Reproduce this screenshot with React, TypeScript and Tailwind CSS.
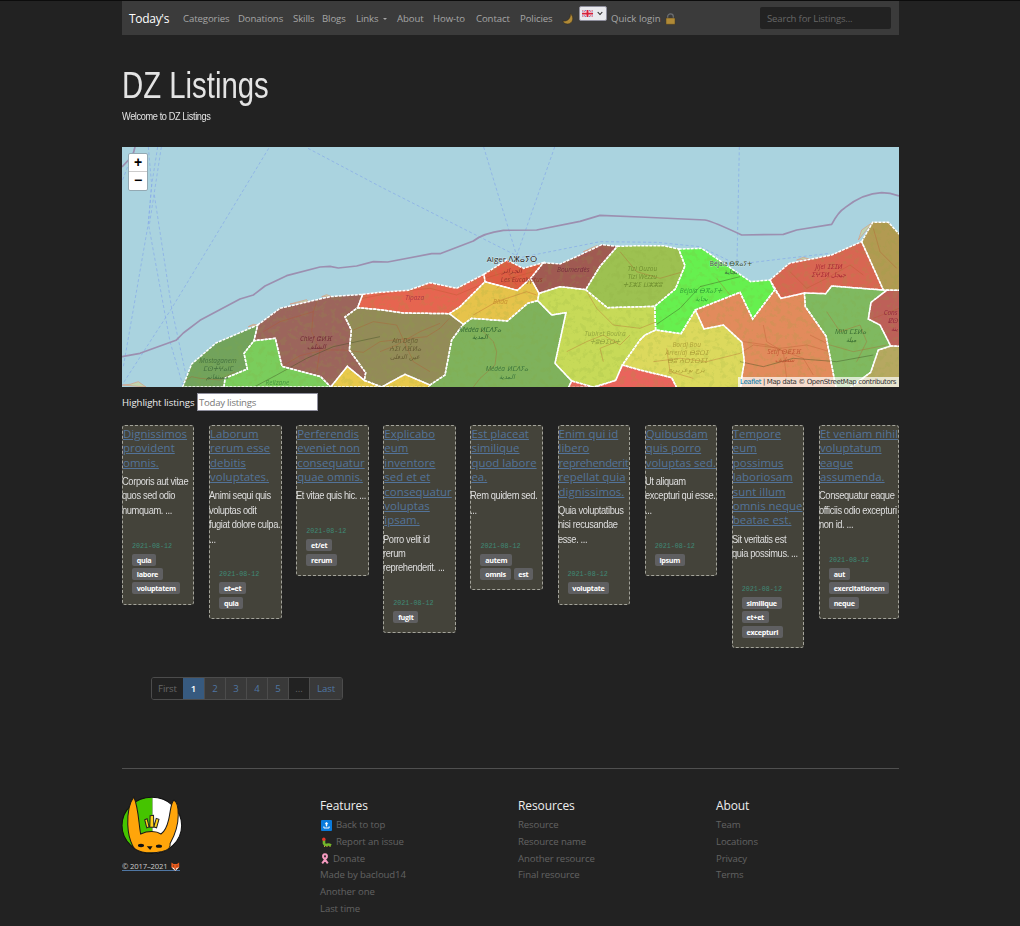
import React from "react";

const navItems: { label: string; cls: string }[] = [
  { label: "Categories", cls: "w-[55px]" },
  { label: "Donations", cls: "w-[55px]" },
  { label: "Skills", cls: "w-[29px]" },
  { label: "Blogs", cls: "w-[34px]" },
  { label: "Links", cls: "w-[41px]" },
  { label: "About", cls: "w-[36px]" },
  { label: "How-to", cls: "w-[43px]" },
  { label: "Contact", cls: "w-[44px]" },
  { label: "Policies", cls: "w-[42px]" },
];

type Listing = { title: string[]; body: string[]; tags: string[][] };

const listings: Listing[] = [
  { title: ["Dignissimos", "provident", "omnis."], body: ["Corporis aut vitae", "quos sed odio", "numquam. ..."], tags: [["quia"], ["labore"], ["voluptatem"]] },
  { title: ["Laborum", "rerum esse", "debitis", "voluptates."], body: ["Animi sequi quis", "voluptas odit", "fugiat dolore culpa.", "..."], tags: [["et=et"], ["quia"]] },
  { title: ["Perferendis", "eveniet non", "consequatur", "quae omnis."], body: ["Et vitae quis hic. ..."], tags: [["et/et"], ["rerum"]] },
  { title: ["Explicabo", "eum", "inventore", "sed et et", "consequatur", "voluptas", "ipsam."], body: ["Porro velit id", "rerum", "reprehenderit. ..."], tags: [["fugit"]] },
  { title: ["Est placeat", "similique", "quod labore", "ea."], body: ["Rem quidem sed.", "..."], tags: [["autem"], ["omnis", "est"]] },
  { title: ["Enim qui id", "libero", "reprehenderit", "repellat quia", "dignissimos."], body: ["Quia voluptatibus", "nisi recusandae", "esse. ..."], tags: [["voluptate"]] },
  { title: ["Quibusdam", "quis porro", "voluptas sed."], body: ["Ut aliquam", "excepturi qui esse.", "..."], tags: [["ipsum"]] },
  { title: ["Tempore", "eum", "possimus", "laboriosam", "sunt illum", "omnis neque", "beatae est."], body: ["Sit veritatis est", "quia possimus. ..."], tags: [["similique"], ["et+et"], ["excepturi"]] },
  { title: ["Et veniam nihil", "voluptatum", "eaque", "assumenda."], body: ["Consequatur eaque", "officiis odio excepturi", "non id. ..."], tags: [["aut"], ["exercitationem"], ["neque"]] },
];

const regions: [string, string][] = [
  ["#72a35c", "188,726 215,657 288,594 413,540 402,587 372,625 382,672 315,700 312,726"],
  ["#7acd5c", "312,726 315,700 382,672 372,625 402,587 466,580 486,664 602,695 632,726"],
  ["#9c655c", "413,540 480,490 600,462 630,455 728,448 713,488 675,516 694,555 688,615 737,683 733,706 682,664 632,726 602,695 486,664 466,580 402,587"],
  ["#e8c94b", "632,726 682,664 733,706 785,726"],
  ["#e8c94b", "785,726 855,688 930,720 925,728"],
  ["#e66550", "728,448 780,442 865,436 930,413 1010,430 1092,388 1095,410 1020,485 988,506 850,504 780,494 713,488"],
  ["#938b58", "713,488 780,494 850,504 988,506 1030,538 995,585 975,690 930,720 855,688 785,726 733,706 737,683 688,615 694,555 675,516"],
  ["#e6c34b", "988,506 1020,485 1095,410 1192,436 1232,400 1257,445 1253,467 1223,475 1162,528 1055,520 1030,538"],
  ["#de5c43", "1092,388 1160,345 1210,370 1270,353 1232,400 1192,436 1095,410"],
  ["#a05a52", "1270,353 1320,357 1380,330 1445,299 1492,304 1440,364 1397,434 1320,425 1257,445 1232,400"],
  ["#9dc151", "1492,304 1560,302 1630,302 1676,312 1695,362 1666,432 1604,484 1462,488 1397,434 1440,364"],
  ["#c7da58", "1257,445 1320,425 1397,434 1462,488 1604,484 1607,555 1575,570 1560,585 1507,660 1487,706 1420,726 1355,708 1305,655 1338,503 1295,510 1253,467"],
  ["#7fb25c", "1030,538 1055,520 1162,528 1223,475 1253,467 1295,510 1338,503 1305,655 1355,708 1345,728 925,728 930,720 975,690 995,585"],
  ["#e9645c", "1345,728 1355,708 1420,726"],
  ["#e9645c", "1420,728 1487,706 1507,660 1560,675 1655,698 1670,728"],
  ["#dcd95d", "1560,585 1575,570 1607,555 1683,566 1726,495 1752,552 1810,540 1866,592 1873,650 1866,692 1862,728 1670,728 1655,698 1560,675 1507,660"],
  ["#66f04f", "1676,312 1745,310 1892,410 1950,405 1964,435 1898,522 1860,442 1726,495 1683,566 1607,555 1604,484 1666,432 1695,362"],
  ["#e28b5c", "1726,495 1860,442 1898,522 1964,435 1983,460 2053,444 2056,485 2118,573 2148,728 1862,728 1866,692 1873,650 1866,592 1810,540 1752,552"],
  ["#d86652", "1950,405 2008,355 2135,330 2225,290 2290,435 2135,423 2117,446 2053,444 1983,460"],
  ["#b29a52", "2225,290 2258,232 2305,232 2345,275 2345,436 2290,435"],
  ["#7fb960", "2053,444 2117,446 2135,423 2300,436 2253,472 2245,522 2280,540 2312,603 2275,615 2252,682 2190,728 2148,728 2118,573 2056,485"],
  ["#bd6058", "2300,436 2345,436 2345,604 2312,603 2280,540 2245,522 2253,472"],
  ["#b6a861", "2312,603 2345,604 2345,728 2190,728 2252,682 2275,615"],
];

const ferries = [
  "M45 6 L6 110", "M85 6 L95 120 L85 235 L10 665", "M113 6 L95 120 L85 235 L150 590 L190 726",
  "M124 6 L88 240", "M103 150 L155 490 L200 700", "M446 10 L155 490 L6 720",
  "M564 10 L785 127 L1190 332", "M1091 6 L1190 332", "M1304 6 L1190 332",
  "M1190 340 L1440 290 L1610 292 L1740 305 L1850 358 L2000 340 L2130 325", "M1858 6 L1851 350 ",
];

const labels: [number, number, string, string][] = [
  [294, 655, "Mostaganem", "#3f6b3a"], [294, 679, "ⵎⵙⵜⵖⴰⵏⵎ", "#3f6b3a"], [290, 702, "مستغانم", "#3f6b3a"],
  [588, 587, "Chlef ⵛⵍⴼ", "#6e2433"], [590, 611, "الشلف", "#6e2433"],
  [472, 721, "Relizane", "#3d9038"], [884, 465, "Tipaza", "#a83545"],
  [855, 593, "Ain Defla", "#625730"], [855, 617, "ⵄⵉⵏ ⴷⴼⵍⴰ", "#625730"], [855, 641, "عين الدفلى", "#625730"],
  [1141, 477, "Blida", "#c48b2d"], [1360, 380, "Boumerdès", "#71263b"],
  [1176, 383, "الجزائر", "#8d2a2a"], [1205, 411, "Les Eucalyptus", "#913029"],
  [1081, 560, "Médéa ⵍⵎⴷⵢⴰ", "#265c2b"], [1081, 583, "المدية", "#265c2b"],
  [1160, 677, "Médéa ⵍⵎⴷⵢⴰ", "#356e38"], [1160, 701, "المدية", "#356e38"],
  [1567, 377, "Tizi Ouzou", "#6c8b2d"], [1567, 401, "Tizi Wezzu", "#6c8b2d"], [1567, 425, "ⵜⵉⵣⵉ ⵡⵣⵣⵓ", "#6c8b2d"],
  [1455, 572, "Tubiret Bouira", "#8fa03c"], [1455, 597, "ⵜⵓⴱⵉⵔⵜ", "#8fa03c"],
  [1743, 443, "Béjaïa ⴱⴳⴰⵢⵜ", "#2f9c36"], [1743, 468, "بجاية", "#2f9c36"],
  [1700, 606, "Bordj Bou", "#a99b35"], [1700, 630, "Arreridj ⴱⵓⵔⵊ", "#a99b35"], [1700, 655, "ⴱⵓ ⵄⵔⵉⵔⵉⵊ", "#a99b35"], [1700, 682, "برج بوعريريج", "#a99b35"],
  [1993, 626, "Sétif ⵙⵟⵉⴼ", "#bd5230"], [1993, 650, "سطيف", "#bd5230"],
  [2126, 371, "Jijel ⵊⵉⵊⵍ", "#a42635"], [2126, 395, "ⵉⵖⵉⵍ جيجل", "#a42635"],
  [2192, 566, "Mila ⵎⵉⵍⴰ", "#33672f"], [2192, 590, "ميلة", "#33672f"],
  [2312, 510, "Cons", "#8e2439"], [2318, 534, "ⵇⵙ", "#8e2439"], [2322, 557, "ينة", "#8e2439"],
];

const roads = [
  "M190 710 L215 695 L240 700 L300 705 L345 680", "M486 664 L540 632 L610 615 L670 615 L730 622 L780 590 L850 582 L920 575 L960 550 L988 520",
  "M430 560 L480 530 L580 500 L590 470 M580 500 L575 560 L600 615 L590 680", "M780 620 L830 600 L900 560 L960 535",
  "M1130 430 L1170 400 L1240 380 M1095 400 L1160 380 L1190 420", "M728 460 L830 440 L930 430 L1010 450 L1080 420",
  "M1060 510 L1130 470 L1220 440 L1250 450", "M1080 550 L1120 590 L1130 620 L1125 660 L1080 700 L1060 726",
  "M1397 434 L1430 490 L1480 540 L1560 550 L1610 530", "M1340 620 L1400 590 L1450 570 L1500 600 L1530 570",
  "M1600 650 L1680 640 L1760 650 L1860 625 L1900 600 L1980 610 L2060 600 L2130 620",
  "M1930 540 L1940 590 L1990 620 L2000 700 M1870 590 L1940 600 L2050 640 L2080 690", "M2070 570 L2130 600 L2200 620 L2300 600",
  "M2120 500 L2160 560 L2220 540 L2240 590 L2210 650", "M1500 320 L1550 380 L1620 400 L1690 380", "M1640 610 L1650 680 L1720 700",
  "M1450 650 L1440 610 L1490 590 M1790 400 L1830 450 M2010 380 L2060 430 L2120 400 L2190 360 L2230 390",
  "M2260 250 L2280 320 L2330 370 M2260 520 L2337 490", "M700 555 L760 530 L830 540 L880 650 L930 680",
];

function Map() {
  return (
    <div className="relative h-[240px] w-[777px] overflow-hidden bg-[#aad3df]">
      <svg className="block" width="777" height="240" viewBox="6 6 2331 720">
        <defs>
          <filter id="terrain" x="0" y="0" width="100%" height="100%">
            <feTurbulence type="fractalNoise" baseFrequency="0.06" numOctaves="4" seed="8" />
            <feColorMatrix values="0 0 0 0 0.25  0 0 0 0 0.4  0 0 0 0 0.05  7 0 0 0 -3.6" />
            <feComposite in2="SourceGraphic" operator="in" />
          </filter>
        </defs>
        <path d="M6 720 L30 718 L55 710 L78 726 Z M385 545 L400 538 L413 540 Z M510 477 L560 464 L565 470 Z M605 455 L620 449 L635 455 Z M1390 320 L1430 302 L1440 305 Z M2215 285 L2225 255 L2258 232 Z M2030 345 L2050 337 L2068 342 Z" fill="#bfd5ae" stroke="#d99a82" strokeWidth="2" />
        {ferries.map((d) => (
          <path key={d} d={d} fill="none" stroke="#86aae8" strokeOpacity="0.7" strokeWidth="3" strokeDasharray="9 7" />
        ))}
        <g fill="none" stroke="#9c8fb0" strokeWidth="5" strokeLinejoin="round">
          <path d="M6 66 L38 32 L45 6" />
          <path d="M6 635 L60 625 L168 586 L190 564 L240 526 L360 462 L400 450 L435 423 L500 392 L600 366 L630 364 L655 369 L710 363 L760 350 L803 351 L935 326 L960 326 L1060 288 Q1090 264 1150 256 L1250 255 L1380 229 L1440 211 L1560 216 L1755 225 Q1780 230 1865 270 L1990 268 L2030 255 L2135 238 Q2155 200 2175 188 Q2230 145 2285 143 Q2310 143 2337 153" />
        </g>
        {regions.map(([fill, points]) => (
          <polygon key={points} points={points} fill={fill} />
        ))}
        <g opacity="0.14" filter="url(#terrain)">
          {regions.map(([, points]) => (
            <polygon key={points} points={points} fill="#000" />
          ))}
        </g>
        <g fill="none" stroke="#b5552a" strokeOpacity="0.32" strokeWidth="3" strokeLinejoin="round">
          {roads.map((d) => (
            <path key={d} d={d} />
          ))}
        </g>
        <path d="M402 726 L470 690 L560 640 L640 605 L780 575 M1607 540 L1680 490 L1740 425 L1860 395 M1860 650 L1930 665 L2020 640 L2150 650 L2260 630" fill="none" stroke="#3a4a20" strokeOpacity="0.4" strokeWidth="3" />
        {regions.map(([, points]) => (
          <polygon key={points} points={points} fill="none" stroke="#fff" strokeWidth="4.5" strokeDasharray="9 3" />
        ))}
        <g fontFamily="'Open Sans','DejaVu Sans',sans-serif" fontSize="19.5" textAnchor="middle">
          {labels.map(([x, y, text, fill]) => (
            <text key={`${x}-${y}`} x={x} y={y} fill={fill} fontStyle="italic" opacity="0.9">{text}</text>
          ))}
          <text x="1176" y="350" fontSize="24" fill="#222" stroke="#fff" strokeWidth="1" paintOrder="stroke">Alger ⴷⵣⴰⵢⵔ</text>
          <text x="1833" y="364" fontSize="19" fill="#26462d" stroke="#e8f4e8" strokeWidth="1" paintOrder="stroke">Béjaïa ⴱⴳⴰⵢⵜ</text>
          <text x="1833" y="387" fontSize="19" fill="#35623d">بجاية</text>
        </g>
      </svg>
      <div className="absolute left-[6px] top-[6px] flex w-[20px] flex-col overflow-hidden rounded-[2px] border border-[#93a9b3] bg-white text-center font-['Liberation_Sans'] text-[14px] font-bold text-black">
        <span className="h-[18px] border-b border-[#ccc] leading-[17px]">+</span>
        <span className="h-[18px] leading-[17px]">−</span>
      </div>
      <div className="absolute bottom-0 right-0 flex h-[10px] w-[161px] items-center whitespace-pre bg-white/70 pl-[2px] font-['DejaVu_Sans'] text-[7px] tracking-[-0.39px] text-[#333]">
        <span className="text-[#0078a8]">Leaflet</span> | Map data © OpenStreetMap contributors
      </div>
    </div>
  );
}

function Moon() {
  return (
    <svg width="12" height="12" viewBox="0 0 12 12" className="mt-[1px]">
      <path d="M8.3 .6 C12.5 3.5 11.3 10.8 5.5 11 C3 11 1.2 9.6 .7 7.8 C5 9 9 5.5 8.3 .6Z" fill="#b08a37" stroke="#352b1b" strokeWidth=".6" />
    </svg>
  );
}

function Lock() {
  return (
    <svg width="11" height="12" viewBox="0 0 11 12" className="mt-px">
      <path d="M2.7 6V3.5a2.8 2.6 0 0 1 5.6 0V6" fill="none" stroke="#6c6f73" strokeWidth="1.2" />
      <rect x="1" y="5" width="9" height="6.3" rx=".6" fill="#b08a37" stroke="#4b3b1c" strokeWidth=".5" />
    </svg>
  );
}

function Flag() {
  return (
    <svg width="11" height="7" viewBox="0 0 11 8" preserveAspectRatio="none">
      <rect width="11" height="8" fill="#7686c4" />
      <path d="M0 0L11 8M11 0L0 8" stroke="#fff" strokeWidth="2" />
      <path d="M0 0L11 8M11 0L0 8" stroke="#d5213b" strokeWidth=".7" />
      <path d="M5.5 0V8M0 4H11" stroke="#fff" strokeWidth="3" />
      <path d="M5.5 0V8M0 4H11" stroke="#d5213b" strokeWidth="2" />
    </svg>
  );
}

function Logo() {
  return (
    <svg width="62" height="61" viewBox="0 0 183 180" className="-ml-px -mt-px block">
      <defs>
        <clipPath id="disc"><ellipse cx="91" cy="87" rx="88" ry="83" /></clipPath>
      </defs>
      <g clipPath="url(#disc)">
        <rect width="93" height="180" fill="#45c400" />
        <rect x="93" width="92" height="180" fill="#fff" />
      </g>
      <ellipse cx="91" cy="87" rx="88" ry="83" fill="none" stroke="#111" strokeWidth="3" />
      <path d="M38 3 C26 18 19 50 20 85 C21 112 26 130 34 146 C37 156 48 162 62 165 Q90 171 122 164 C140 159 147 153 145 140 C159 115 169 80 169 55 C169 32 166 17 156 12 C146 22 147 42 141 68 C136 90 130 104 118 112 C104 103 80 102 58 112 C52 82 52 36 38 3Z" fill="#ffa50a" stroke="#191919" strokeWidth="3" />
      <path d="M70 70 L77 67 L83 91 L76 94Z M86 58 L96 57 L97 92 L85 92Z M104 66 L112 69 L105 94 L97 91Z" fill="#ffd21c" stroke="#222" strokeWidth="3" />
      <ellipse cx="59" cy="146" rx="9" ry="5" fill="#111" />
      <ellipse cx="112" cy="148" rx="9" ry="5" fill="#111" />
      <path d="M76 148 L93 148 L86 159Z" fill="#111" />
    </svg>
  );
}

function TopIcon() {
  return (
    <svg width="11" height="11" viewBox="0 0 11 11">
      <rect width="11" height="11" rx="1" fill="#0a7bdc" />
      <path d="M5.5 2L7 4H6V6.2H5V4H4Z" fill="#fff" stroke="#fff" strokeWidth=".4" />
      <path d="M2.9 6.4V8H8.1V6.4" fill="none" stroke="#fff" strokeWidth="1" />
    </svg>
  );
}

function BugIcon() {
  return (
    <svg width="11" height="11" viewBox="0 0 11 11">
      <path d="M3 3V6.5Q4 8.5 6 7.8T10 8.5" fill="none" stroke="#73b72b" strokeWidth="2.6" />
      <circle cx="2.8" cy="2.3" r="1.7" fill="#e4382b" />
      <path d="M3 9.6L4 9M6 9.8V9M9 10V9.3" stroke="#e9c13b" />
    </svg>
  );
}

function RibbonIcon() {
  return (
    <svg width="8" height="11" viewBox="0 0 8 11">
      <path d="M1.2 10.3L5.8 4.2Q6.5 1.2 4 1.2T2.2 4.2L6.8 10.3" fill="none" stroke="#f59ac0" strokeWidth="2" />
    </svg>
  );
}

function FoxIcon() {
  return (
    <svg width="9" height="9" viewBox="0 0 9 9">
      <path d="M.5 .3L2.7 2H6.3L8.5 .3L8.7 5L4.5 9L.3 5Z" fill="#e85a1c" />
      <path d="M.4 5.2L3 6L4.5 8L6 6L8.6 5.2L4.5 9Z" fill="#fff" />
      <path d="M2.2 4h1M5.8 4h1M4 7.4h1" stroke="#222" strokeWidth=".9" />
    </svg>
  );
}

function Card({ item, last }: { item: Listing; last: boolean }) {
  return (
    <article className={`flex shrink-0 flex-col rounded-[3px] border border-dashed border-[#a4a49b] bg-[#44433a] pb-[8px] pt-px ${last ? "w-[79.8px]" : "w-[72.4px]"}`}>
      <h2 className="mb-[4.8px] font-['Open_Sans'] text-[11.4px] leading-[14.4px] text-[#537399] underline">
        {item.title.map((line) => (
          <span key={line} className={`block whitespace-nowrap ${line === "reprehenderit" ? "tracking-[-0.35px]" : "tracking-[0.03px]"}`}>{line}</span>
        ))}
      </h2>
      <p className="-ml-px mb-[19.8px] origin-left scale-x-[0.935] font-['Liberation_Sans'] text-[10px] leading-[14.4px] tracking-[-0.42px] text-[#dedede]">
        {item.body.map((line) => (
          <span key={line} className="block whitespace-nowrap">{line}</span>
        ))}
      </p>
      <div className="pl-[9px]">
        <time className="relative top-[0.6px] block font-['Liberation_Mono'] text-[6.7px] leading-[14.4px] text-[#3f8a76]">2021-08-12</time>
        {item.tags.map((row) => (
          <div key={row[0]} className="flex h-[14.4px] items-center gap-[3px]">
            {row.map((tag) => (
              <span key={tag} className="flex h-[12px] items-center rounded-[2px] bg-[#5f5f61] px-[4.8px] font-['Open_Sans'] text-[7.2px] font-bold leading-[12px] tracking-[-0.3px] text-white">{tag}</span>
            ))}
          </div>
        ))}
      </div>
    </article>
  );
}

function FooterColumn({ title, items }: { title: string; items: { label: string; icon?: React.ReactNode }[] }) {
  return (
    <div className="w-[198px] shrink-0">
      <h3 className="mb-[3px] text-[12px] leading-[17px] tracking-[-0.1px] text-[#eee]">{title}</h3>
      <ul className="text-[9.6px] leading-[16.8px] tracking-[-0.1px] text-[#626262]">
        {items.map((i) => (
          <li key={i.label} className="flex h-[16.8px] items-center gap-[4px]">
            {i.icon}
            {i.label}
          </li>
        ))}
      </ul>
    </div>
  );
}

const pages = [
  { label: "First", cls: "w-[31px] bg-[#222] text-[#666]" },
  { label: "1", cls: "w-[21px] bg-[#375a7f] text-white font-semibold" },
  { label: "2", cls: "w-[21px] bg-[#393939] text-[#4f76a3]" },
  { label: "3", cls: "w-[21px] bg-[#393939] text-[#4f76a3]" },
  { label: "4", cls: "w-[21px] bg-[#393939] text-[#4f76a3]" },
  { label: "5", cls: "w-[21px] bg-[#393939] text-[#4f76a3]" },
  { label: "...", cls: "w-[21px] bg-[#222] text-[#666]" },
  { label: "Last", cls: "w-[33px] bg-[#393939] text-[#4f76a3]" },
];

export default function App() {
  return (
    <div className="flex h-[926px] w-full justify-center overflow-hidden border-t border-[#0c0c0c] bg-[#222] pl-px font-['Open_Sans',sans-serif] text-[#ddd]">
      <div className="w-[777px]">
        <header className="flex h-[34px] items-center bg-[#3b3b3b] pl-[7px] pr-[8px]">
          <span className="w-[54px] pt-[2px] text-[12px] tracking-[-0.3px] text-white">Today's</span>
          <nav className="flex pt-[2px] text-[9.6px] text-[#a6a6a6]">
            {navItems.map((n) => (
              <span key={n.label} className={`flex items-center whitespace-nowrap tracking-[-0.1px] ${n.cls}`}>
                {n.label}
                {n.label === "Links" && <i className="ml-[5px] border-x-[2px] border-t-[2px] border-x-transparent border-t-[#a6a6a6]" />}
              </span>
            ))}
          </nav>
          <span className="w-[17px]"><Moon /></span>
          <span className="mb-[9px] mr-[4px] flex h-[15px] w-[28px] items-center gap-[4px] rounded-[2px] border border-[#8f8f9d] bg-[#e9e9ed] pl-[2px]">
            <Flag />
            <svg width="6" height="5" viewBox="0 0 6 5"><path d="M.7 1L3 3.5L5.3 1" fill="none" stroke="#222" strokeWidth="1.1" /></svg>
          </span>
          <span className="mr-[4px] whitespace-nowrap pt-[2px] text-[9.6px] text-[#a6a6a6]">Quick login</span>
          <Lock />
          <span className="ml-auto flex h-[22px] w-[131px] items-center rounded-[2px] bg-[#222] pl-[7px] pt-[2px] text-[9.6px] tracking-[-0.18px] text-[#666]">Search for Listings...</span>
        </header>

        <h1 className="mt-[29px] h-[44px] w-[200px] origin-left scale-x-[0.815] whitespace-nowrap font-['Liberation_Sans'] text-[36px] leading-[44px] text-[#e4e4e4]">DZ Listings</h1>
        <p className="mt-px h-[15px] origin-left scale-x-[0.92] font-['Liberation_Sans'] text-[10px] leading-[15px] tracking-[-0.42px] text-[#e4e4e4]">Welcome to DZ Listings</p>

        <div className="mt-[23px]"><Map /></div>

        <div className="mt-[6px] flex h-[18px] items-center text-[9.6px] text-[#eee]">
          <span className="w-[75px] whitespace-nowrap pt-[2px] tracking-[-0.05px]">Highlight listings</span>
          <span className="flex h-[18px] w-[121px] items-center border border-[#8f8f9d] bg-white pl-px pt-[2px] tracking-[-0.25px] text-[#777]">Today listings</span>
        </div>

        <main className="mt-[14px] flex h-[252px] items-start gap-[14.72px]">
          {listings.map((item, i) => (
            <Card key={item.title[0]} item={item} last={i === listings.length - 1} />
          ))}
        </main>

        <div className="ml-[29px] flex h-[23px] w-[192px] overflow-hidden rounded-[3px] border border-[#4c4c4c] text-[9.6px]">
          {pages.map((p, i) => (
            <span key={p.label} className={`flex shrink-0 items-center justify-center pt-[2px] tracking-[-0.1px] ${i > 1 ? "border-l border-[#4c4c4c]" : ""} ${p.cls}`}>{p.label}</span>
          ))}
        </div>

        <footer className="mt-[68px] flex border-t border-[#505050] pt-[28px]">
          <div className="w-[198px] shrink-0">
            <Logo />
            <p className="mt-[5px] flex h-[9px] w-[58px] items-center gap-[4px] whitespace-nowrap border-b border-[#4f76a3] text-[7.7px] leading-[8px] tracking-[-0.18px] text-[#ccc]">
              © 2017–2021 <FoxIcon />
            </p>
          </div>
          <FooterColumn
            title="Features"
            items={[
              { label: "Back to top", icon: <span className="ml-px flex"><TopIcon /></span> },
              { label: "Report an issue", icon: <span className="ml-px flex"><BugIcon /></span> },
              { label: "Donate", icon: <span className="ml-px flex"><RibbonIcon /></span> },
              { label: "Made by bacloud14" },
              { label: "Another one" },
              { label: "Last time" },
            ]}
          />
          <FooterColumn title="Resources" items={[{ label: "Resource" }, { label: "Resource name" }, { label: "Another resource" }, { label: "Final resource" }]} />
          <FooterColumn title="About" items={[{ label: "Team" }, { label: "Locations" }, { label: "Privacy" }, { label: "Terms" }]} />
        </footer>
      </div>
    </div>
  );
}
